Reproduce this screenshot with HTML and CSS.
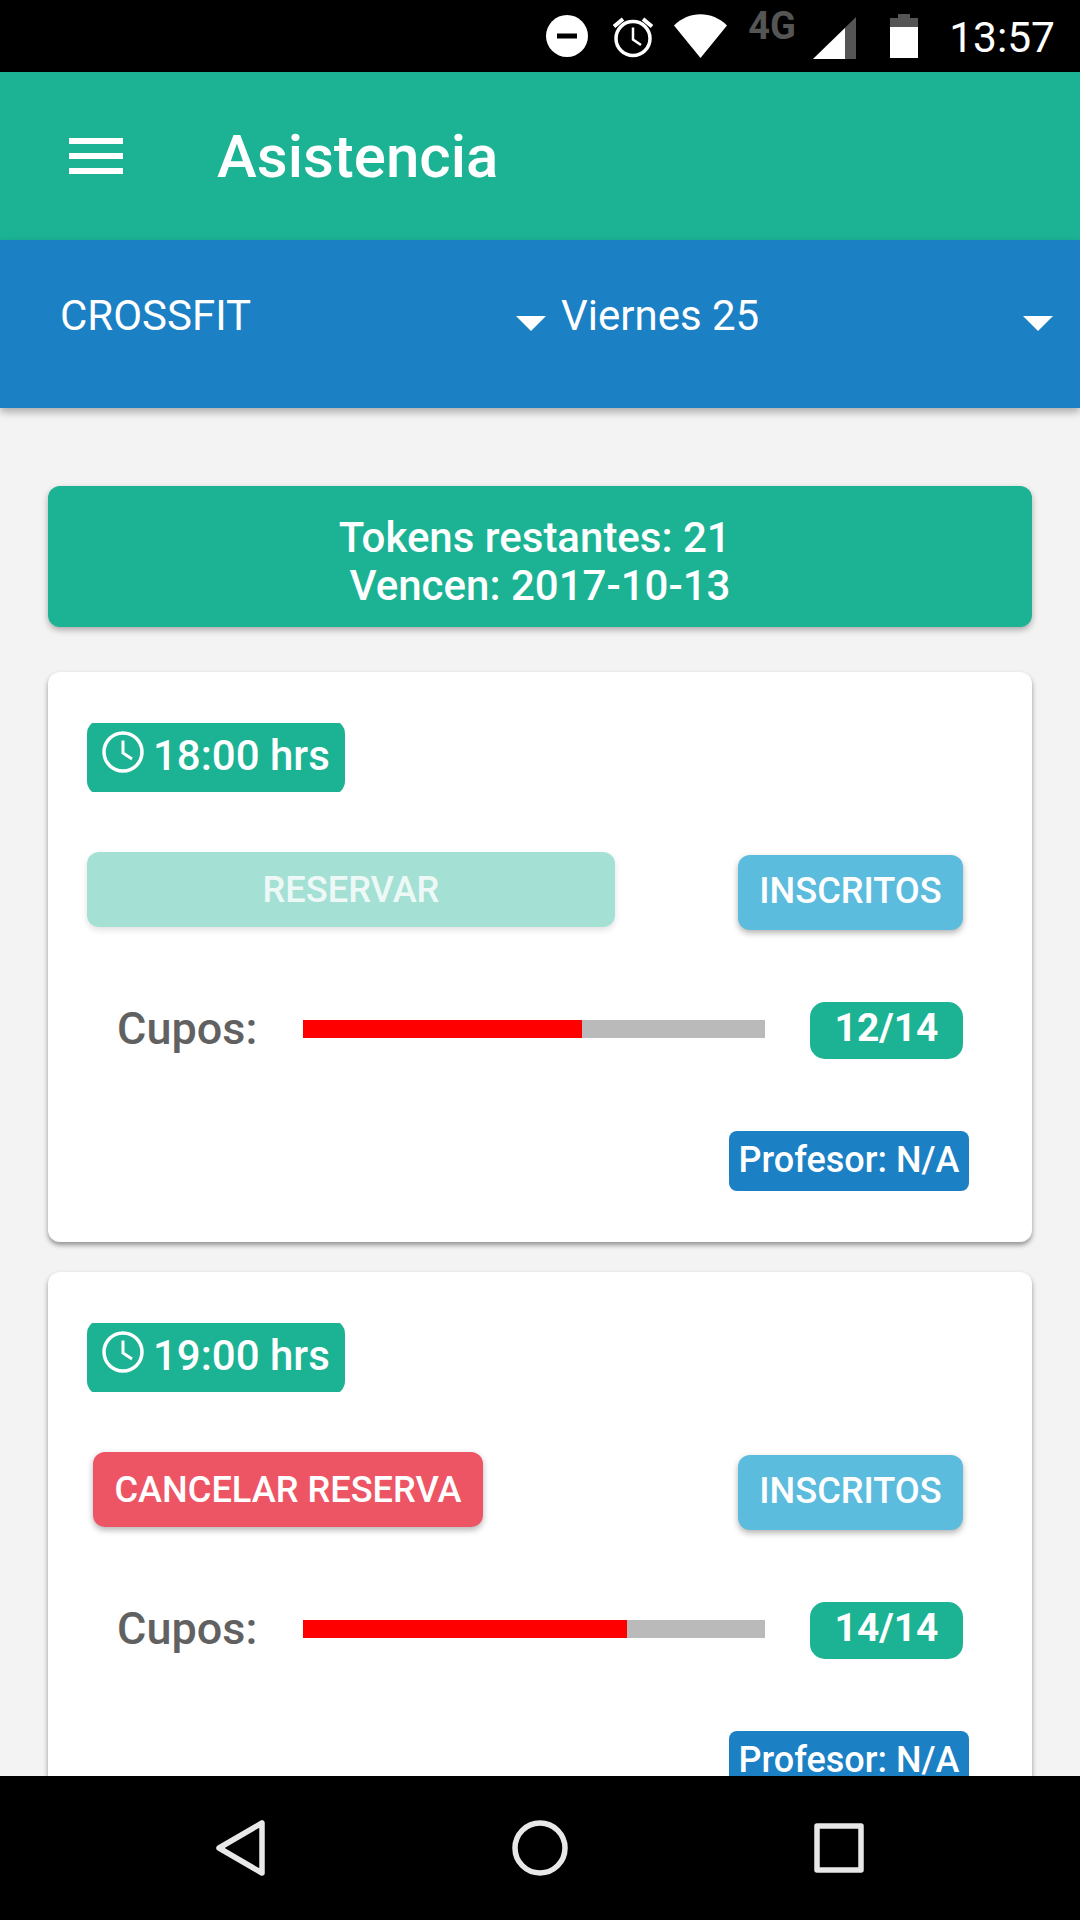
FILE: index.html
```html
<!DOCTYPE html>
<html lang="es">
<head>
    <meta charset="UTF-8">
    <meta name="viewport" content="width=device-width, initial-scale=1.0">
    <title>Asistencia</title>
    <link rel="stylesheet" href="styles.css">
</head>
<body>
    <div class="app">
        <!-- barra de estado -->
        <div class="status-bar">
            <svg class="st-dnd" width="42" height="42" viewBox="0 0 42 42"><circle cx="21" cy="21" r="21" fill="#fff"/><rect x="11" y="18.500" width="20" height="5" fill="#000"/></svg>
            <svg class="st-alarm" width="42" height="44" viewBox="0 0 42 44" fill="none" stroke="#fff"><circle cx="21" cy="24.500" r="17" stroke-width="3.500"/><path d="M21 13.500V25.500L29 31" stroke-width="2.500"/><path d="M2 12.500L11 5M40 12.500L31 5" stroke-width="4"/></svg>
            <svg class="st-wifi" width="53" height="44" viewBox="0 0 53 44"><path d="M0 11.500C15 -3.500 38 -3.500 53 11.500L26.500 44Z" fill="#fff"/></svg>
            <span class="st-net">4G</span>
            <svg class="st-signal" width="43" height="42" viewBox="0 0 43 42"><path d="M0 42L43 0V42Z" fill="#555"/><path d="M0 42L32 11V42Z" fill="#fff"/></svg>
            <svg class="st-battery" width="28" height="44" viewBox="0 0 28 44"><path d="M0 4H8V0H20V4H28V44H0Z" fill="#555"/><rect y="13" width="28" height="31" fill="#fff"/></svg>
            <span class="st-time">13:57</span>
        </div>

        <div class="toolbar">
            <div class="menu-icon"><span></span><span></span><span></span></div>
            <div class="toolbar-title">Asistencia</div>
        </div>

        <div class="filters">
            <div class="select select-class"><span>CROSSFIT</span><i class="caret"></i></div>
            <div class="select select-day"><span>Viernes 25</span><i class="caret"></i></div>
        </div>

        <div class="content">
            <div class="tokens">
                <div>Tokens restantes: 21&nbsp;</div>
                <div>Vencen: 2017-10-13</div>
            </div>

            <!-- clase 1 -->
            <div class="card">
                <div class="hour">
                    <svg width="42" height="42" viewBox="0 0 42 42" fill="none" stroke="#fff"><circle cx="21" cy="21" r="19" stroke-width="3.500"/><path d="M21 9.500V22L30 28" stroke-width="3"/></svg>
                    <span>18:00 hrs</span>
                </div>
                <div class="actions">
                    <button class="btn btn-reserve">RESERVAR</button>
                    <button class="btn btn-info">INSCRITOS</button>
                </div>
                <div class="slots">
                    <span class="slots-label">Cupos:</span>
                    <div class="bar"><div class="bar-fill" style="width: 60.400%"></div></div>
                    <span class="slots-count">12/14</span>
                </div>
                <div class="teacher-row"><span class="teacher">Profesor: N/A</span></div>
            </div>

            <!-- clase 2 -->
            <div class="card">
                <div class="hour">
                    <svg width="42" height="42" viewBox="0 0 42 42" fill="none" stroke="#fff"><circle cx="21" cy="21" r="19" stroke-width="3.500"/><path d="M21 9.500V22L30 28" stroke-width="3"/></svg>
                    <span>19:00 hrs</span>
                </div>
                <div class="actions">
                    <button class="btn btn-cancel">CANCELAR RESERVA</button>
                    <button class="btn btn-info">INSCRITOS</button>
                </div>
                <div class="slots">
                    <span class="slots-label">Cupos:</span>
                    <div class="bar"><div class="bar-fill" style="width: 70.200%"></div></div>
                    <span class="slots-count">14/14</span>
                </div>
                <div class="teacher-row"><span class="teacher">Profesor: N/A</span></div>
            </div>
        </div>

        <div class="nav-bar">
            <svg width="50" height="56" viewBox="0 0 50 56" fill="none" stroke="#e8e8e8" stroke-width="5.500" stroke-linejoin="round"><path d="M46 3V53L3 28Z"/></svg>
            <svg width="56" height="56" viewBox="0 0 56 56" fill="none" stroke="#e8e8e8" stroke-width="5.500"><circle cx="28" cy="28" r="25"/></svg>
            <svg width="50" height="50" viewBox="0 0 50 50" fill="none" stroke="#e8e8e8" stroke-width="5.500" stroke-linejoin="round"><rect x="3" y="3" width="44" height="44"/></svg>
        </div>
    </div>
</body>
</html>
```

FILE: styles.css
```css
* {
    box-sizing: border-box;
}

body {
    margin: 0;
    background: #f3f3f3;
    font-family: Roboto, sans-serif;
}

.app {
    width: 1080px;
    height: 1920px;
    display: flex;
    flex-direction: column;
    overflow: hidden;
}

/* barra de estado */
.status-bar {
    height: 72px;
    flex-shrink: 0;
    background: #000;
    display: flex;
    align-items: center;
    justify-content: flex-end;
    padding-right: 25px;
    color: #fff;
}

.status-bar svg {
    display: block;
    flex-shrink: 0;
}

.st-dnd {
    margin-right: 24px;
}

.st-alarm {
    margin-right: 20px;
}

.st-wifi {
    margin-right: 21px;
}

.st-net {
    width: 50px;
    margin-right: 15px;
    margin-bottom: 20px;
    color: #555;
    font-size: 38px;
    font-weight: 700;
    line-height: 34px;
    white-space: nowrap;
}

.st-signal {
    margin-right: 34px;
    margin-top: 3px;
}

.st-battery {
    margin-right: 31px;
}

.st-time {
    font-size: 42.500px;
    line-height: 44px;
    margin-top: 3px;
}

.toolbar {
    height: 168px;
    flex-shrink: 0;
    background: #1bb394;
    display: flex;
    align-items: center;
    padding-left: 69px;
    color: #fff;
}

.menu-icon {
    width: 54px;
    display: flex;
    flex-direction: column;
    gap: 9px;
    margin-right: 94px;
}

.menu-icon span {
    display: block;
    height: 6px;
    background: #fff;
}

.toolbar-title {
    font-size: 60px;
    font-weight: 500;
}

.filters {
    height: 168px;
    flex-shrink: 0;
    background: #1c80c5;
    display: flex;
    align-items: center;
    color: #fff;
    font-size: 42px;
    padding-left: 60px;
    padding-right: 27px;
    box-shadow: 0 4px 8px rgba(0, 0, 0, 0.3);
    position: relative;
}

.select {
    display: flex;
    align-items: center;
    justify-content: space-between;
}

.select span {
    margin-bottom: 18px;
}

.select-class {
    width: 486px;
    margin-right: 15px;
}

.select-day {
    flex: 1;
}

.caret {
    width: 0;
    height: 0;
    margin-top: -1px;
    border-style: solid;
    border-width: 15px 15px 0 15px;
    border-color: #fff transparent transparent transparent;
}

.content {
    flex: 1;
    min-height: 0;
    overflow: hidden;
    padding: 78px 48px 0;
}

.tokens {
    height: 141px;
    background: #1bb394;
    border-radius: 12px;
    color: #fff;
    font-size: 42px;
    font-weight: 500;
    line-height: 48px;
    text-align: center;
    padding-top: 28px;
    margin-bottom: 45px;
    box-shadow: 0 3px 6px rgba(0, 0, 0, 0.3);
}

.card {
    height: 570px;
    flex-shrink: 0;
    background: #fff;
    border-radius: 12px;
    padding: 48px 69px 0 39px;
    margin-bottom: 30px;
    box-shadow: 0 3px 5px rgba(0, 0, 0, 0.4);
}

/* se recorta arriba y abajo, como en la app */
.hour {
    width: 258px;
    height: 75px;
    background: #1bb394;
    border-radius: 14px;
    color: #fff;
    font-size: 42px;
    font-weight: 500;
    display: flex;
    align-items: flex-start;
    gap: 9px;
    padding-left: 15px;
    clip-path: inset(3px 0);
}

.hour svg {
    margin-top: 11px;
    flex-shrink: 0;
}

.hour span {
    line-height: 72px;
}

.actions {
    display: flex;
    justify-content: space-between;
    align-items: flex-start;
    margin-top: 57px;
    height: 78px;
}

.btn {
    height: 75px;
    border: none;
    border-radius: 12px;
    color: #fff;
    font-family: Roboto, sans-serif;
    font-size: 36.200px;
    font-weight: 500;
    padding: 0;
    box-shadow: 0 3px 6px rgba(0, 0, 0, 0.3);
}

.btn-reserve {
    width: 528px;
    background: #a4e1d4;
    color: #eef9f7;
    box-shadow: 0 3px 6px rgba(0, 0, 0, 0.12);
}

.btn-cancel {
    width: 390px;
    margin-left: 6px;
    background: #ed5565;
}

.btn-info {
    width: 225px;
    margin-top: 3px;
    padding-bottom: 4px;
    background: #5bbcde;
}

.slots {
    display: flex;
    align-items: center;
    height: 57px;
    margin-top: 72px;
}

.slots-label {
    width: 216px;
    padding-left: 30px;
    padding-bottom: 4px;
    color: #616161;
    font-size: 45px;
    font-weight: 500;
    flex-shrink: 0;
}

.bar {
    width: 462px;
    height: 18px;
    background: #bababa;
    flex-shrink: 0;
    margin-top: -4px;
}

.bar-fill {
    height: 100%;
    background: #f00;
}

.slots-count {
    width: 153px;
    height: 57px;
    margin-left: 45px;
    background: #1bb394;
    border-radius: 15px;
    color: #fff;
    font-size: 39px;
    font-weight: 700;
    line-height: 52px;
    text-align: center;
    flex-shrink: 0;
}

.teacher-row {
    display: flex;
    justify-content: flex-end;
    margin-top: 72px;
    margin-right: -6px;
}

.teacher {
    width: 240px;
    height: 60px;
    background: #1c80c5;
    border-radius: 8px;
    color: #fff;
    font-size: 36px;
    font-weight: 500;
    line-height: 58px;
    text-align: center;
    white-space: nowrap;
}

.nav-bar {
    height: 144px;
    flex-shrink: 0;
    background: #000;
    display: flex;
    align-items: center;
    padding-left: 216px;
    gap: 246px;
    position: relative;
}
```
